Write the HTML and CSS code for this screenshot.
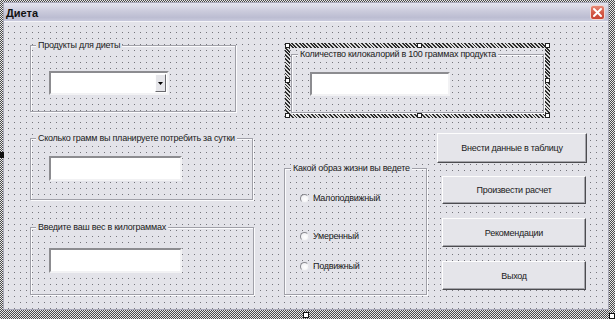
FILE: index.html
```html
<!DOCTYPE html>
<html lang="ru">
<head>
<meta charset="utf-8">
<title>Диета</title>
<link rel="stylesheet" href="styles.css">
</head>
<body>
<div class="screen">
  <div class="form">
    <div class="titlebar">
      <span class="title">Диета</span>
      <span class="close">
        <svg width="11" height="11" viewBox="0 0 11 11"><path d="M2 2 L9 9 M9 2 L2 9" stroke="#fff" stroke-width="2" stroke-linecap="round"/></svg>
      </span>
    </div>
    <div class="canvas">
      <div class="col-left">
        <div class="frame f1">
          <div class="legend">Продукты для диеты</div>
          <div class="combo">
            <span class="drop"><svg width="5" height="3" viewBox="0 0 5 3"><path d="M0 0 H5 L2.5 3 Z" fill="#000"/></svg></span>
          </div>
        </div>
        <div class="frame f2">
          <div class="legend">Сколько грамм вы планируете потребить за сутки</div>
          <div class="textbox tb-left t2"></div>
        </div>
        <div class="frame f3">
          <div class="legend">Введите ваш вес в килограммах</div>
          <div class="textbox tb-left t3"></div>
        </div>
      </div>
      <div class="col-right">
        <div class="sel">
          <div class="frame fsel">
            <div class="legend lsel">Количество килокалорий в 100 граммах продукта</div>
            <div class="textbox tsel"></div>
          </div>
          <span class="h h-tl"></span><span class="h h-tm"></span><span class="h h-tr"></span>
          <span class="h h-ml"></span><span class="h h-mr"></span>
          <span class="h h-bl"></span><span class="h h-bm"></span><span class="h h-br"></span>
        </div>
        <div class="lower">
          <div class="frame fradio">
            <div class="legend">Какой образ жизни вы ведете</div>
            <div class="radio r1"><span class="dot"></span><span>Малоподвижный</span></div>
            <div class="radio r2"><span class="dot"></span><span>Умеренный</span></div>
            <div class="radio r3"><span class="dot"></span><span>Подвижный</span></div>
          </div>
          <div class="buttons">
            <div class="btn b1">Внести данные в таблицу</div>
            <div class="btn b2">Произвести расчет</div>
            <div class="btn b3">Рекомендации</div>
            <div class="btn b4">Выход</div>
          </div>
        </div>
      </div>
    </div>
  </div>
  <span class="fh fh-ml"></span>
  <span class="fh fh-bm"></span>
  <span class="fh fh-br"></span>
</div>
</body>
</html>
```

FILE: styles.css
```css
* { box-sizing: border-box; }
html, body { margin: 0; padding: 0; }
body {
  width: 615px;
  height: 319px;
  overflow: hidden;
  font-family: "Liberation Sans", Arial, sans-serif;
  font-size: 9px;
  letter-spacing: -0.25px;
  color: #1a1a1a;
}
.screen {
  position: relative;
  width: 615px;
  height: 319px;
  padding: 2px 6px 9px 3px;
  background: repeating-conic-gradient(#4a4a4a 0 25%, #e8e8e8 0 50%) 0 0 / 2px 2px;
}
.form {
  height: 100%;
  border: 1px solid #a8a8b8;
  display: flex;
  flex-direction: column;
  background: #e3e3e9;
}
.titlebar {
  height: 19px;
  flex: none;
  display: flex;
  align-items: center;
  justify-content: space-between;
  padding: 0 3px 0 2px;
  background: linear-gradient(#e4e4ee, #cbcbdc 45%, #bcbdd2 80%, #c8c9dc);
  border-bottom: 1px solid #f4f4f8;
}
.title {
  font-weight: bold;
  font-size: 11px;
  letter-spacing: 0;
  color: #111;
  margin-top: 1px;
}
.close {
  width: 15px;
  height: 15px;
  border-radius: 3px;
  border: 1px solid #f0d8d4;
  background: linear-gradient(#e88a78, #d45a48 50%, #c84434);
  display: flex;
  align-items: center;
  justify-content: center;
}
.canvas {
  flex: 1;
  display: flex;
  align-items: flex-start;
  padding-left: 26px;
  background-color: #e3e3e9;
  background-image: conic-gradient(at 1px 1px, transparent 75%, #75757c 0);
  background-size: 6px 6px;
  background-attachment: fixed;
  background-position: 2px 2px;
}
.col-left {
  width: 224px;
  flex: none;
  display: flex;
  flex-direction: column;
}
.frame {
  border: 1px solid #a0a0a8;
  box-shadow: inset 1px 1px 0 #fbfbfd, 1px 1px 0 #fbfbfd;
}
.legend {
  width: fit-content;
  margin: -6px 0 0 5px;
  padding: 0 2px;
  line-height: 11px;
  background: #e3e3e9;
  white-space: nowrap;
}
.f1 { margin-top: 23px; width: 206px; height: 67px; }
.f2 { margin-top: 26px; width: 223px; height: 62px; }
.f3 { margin-top: 27px; width: 224px; height: 68px; }
.textbox, .combo {
  background: #fff;
  border: 2px solid;
  border-color: #8c8c90 #f2f2f4 #f2f2f4 #8c8c90;
}
.combo {
  margin: 20px 0 0 18px;
  width: 120px;
  height: 24px;
  display: flex;
  justify-content: flex-end;
  align-items: stretch;
  padding: 1px 1px 1px 0;
}
.drop {
  width: 11px;
  background: #e6e6ea;
  border: 1px solid;
  border-color: #fdfdfd #6a6a6e #6a6a6e #fdfdfd;
  display: flex;
  align-items: center;
  justify-content: center;
}
.tb-left { margin-left: 18px; width: 133px; height: 25px; }
.t2 { margin-top: 12px; }
.t3 { margin-top: 15px; }
.col-right {
  margin-left: 30px;
  flex: none;
  display: flex;
  flex-direction: column;
}
.sel {
  position: relative;
  margin: 21px 0 0 1px;
  width: 265px;
  height: 75px;
  border: 5px solid transparent;
  background:
    conic-gradient(at 1px 1px, transparent 75%, #75757c 0) 2px 2px / 6px 6px fixed padding-box,
    linear-gradient(#e3e3e9, #e3e3e9) padding-box,
    repeating-linear-gradient(45deg, #2e2e2e 0 1.3px, #dcdcdc 1.3px 2.6px) border-box;
}
.fsel {
  margin: 6px 1px 0 1px;
  height: 59px;
}
.lsel { margin-left: 6px; }
.tsel { margin: 12px 0 0 18px; width: 140px; height: 24px; }
.h {
  position: absolute;
  width: 5px;
  height: 5px;
  background: #fff;
  border: 1px solid #222;
}
.h-tl { left: -5px; top: -5px; }
.h-tm { left: 127px; top: -5px; }
.h-tr { right: -5px; top: -5px; }
.h-ml { left: -5px; top: 30px; }
.h-mr { right: -5px; top: 30px; }
.h-bl { left: -5px; bottom: -5px; }
.h-bm { left: 127px; bottom: -5px; }
.h-br { right: -5px; bottom: -5px; }
.lower {
  display: flex;
  align-items: flex-start;
}
.fradio {
  margin-top: 50px;
  width: 143px;
  height: 127px;
}
.fradio .legend { margin-left: 6px; }
.radio {
  display: flex;
  align-items: center;
  height: 12px;
  margin-left: 15px;
  gap: 4px;
}
.r1 { margin-top: 18px; }
.r2 { margin-top: 26px; }
.r3 { margin-top: 18px; }
.dot {
  width: 9px;
  height: 9px;
  border-radius: 50%;
  border: 1px solid;
  border-color: #8a8a90 #e8e8ec #e8e8ec #8a8a90;
  background: radial-gradient(circle at 60% 60%, #fff, #ececf0);
}
.buttons {
  display: flex;
  flex-direction: column;
  margin-left: 10px;
}
.btn {
  display: flex;
  align-items: center;
  justify-content: center;
  background: #e5e5ea;
  border: 1px solid;
  border-color: #fdfdfd #4c4c50 #4c4c50 #fdfdfd;
  box-shadow: inset -1px -1px 0 #a4a4aa;
  white-space: nowrap;
}
.b1 { margin-top: 15px; width: 150px; height: 30px; }
.b2 { margin: 13px 0 0 5px; width: 144px; height: 28px; }
.b3 { margin: 14px 0 0 5px; width: 144px; height: 29px; }
.b4 { margin: 14px 0 0 5px; width: 144px; height: 29px; }
.fh {
  position: absolute;
  width: 6px;
  height: 6px;
  background: #fff;
  border: 1px solid #111;
}
.fh-ml { left: 0; top: 152px; width: 4px; background: #111; }
.fh-bm { left: 303px; top: 312px; }
.fh-br { right: 0; bottom: 0; }
```
